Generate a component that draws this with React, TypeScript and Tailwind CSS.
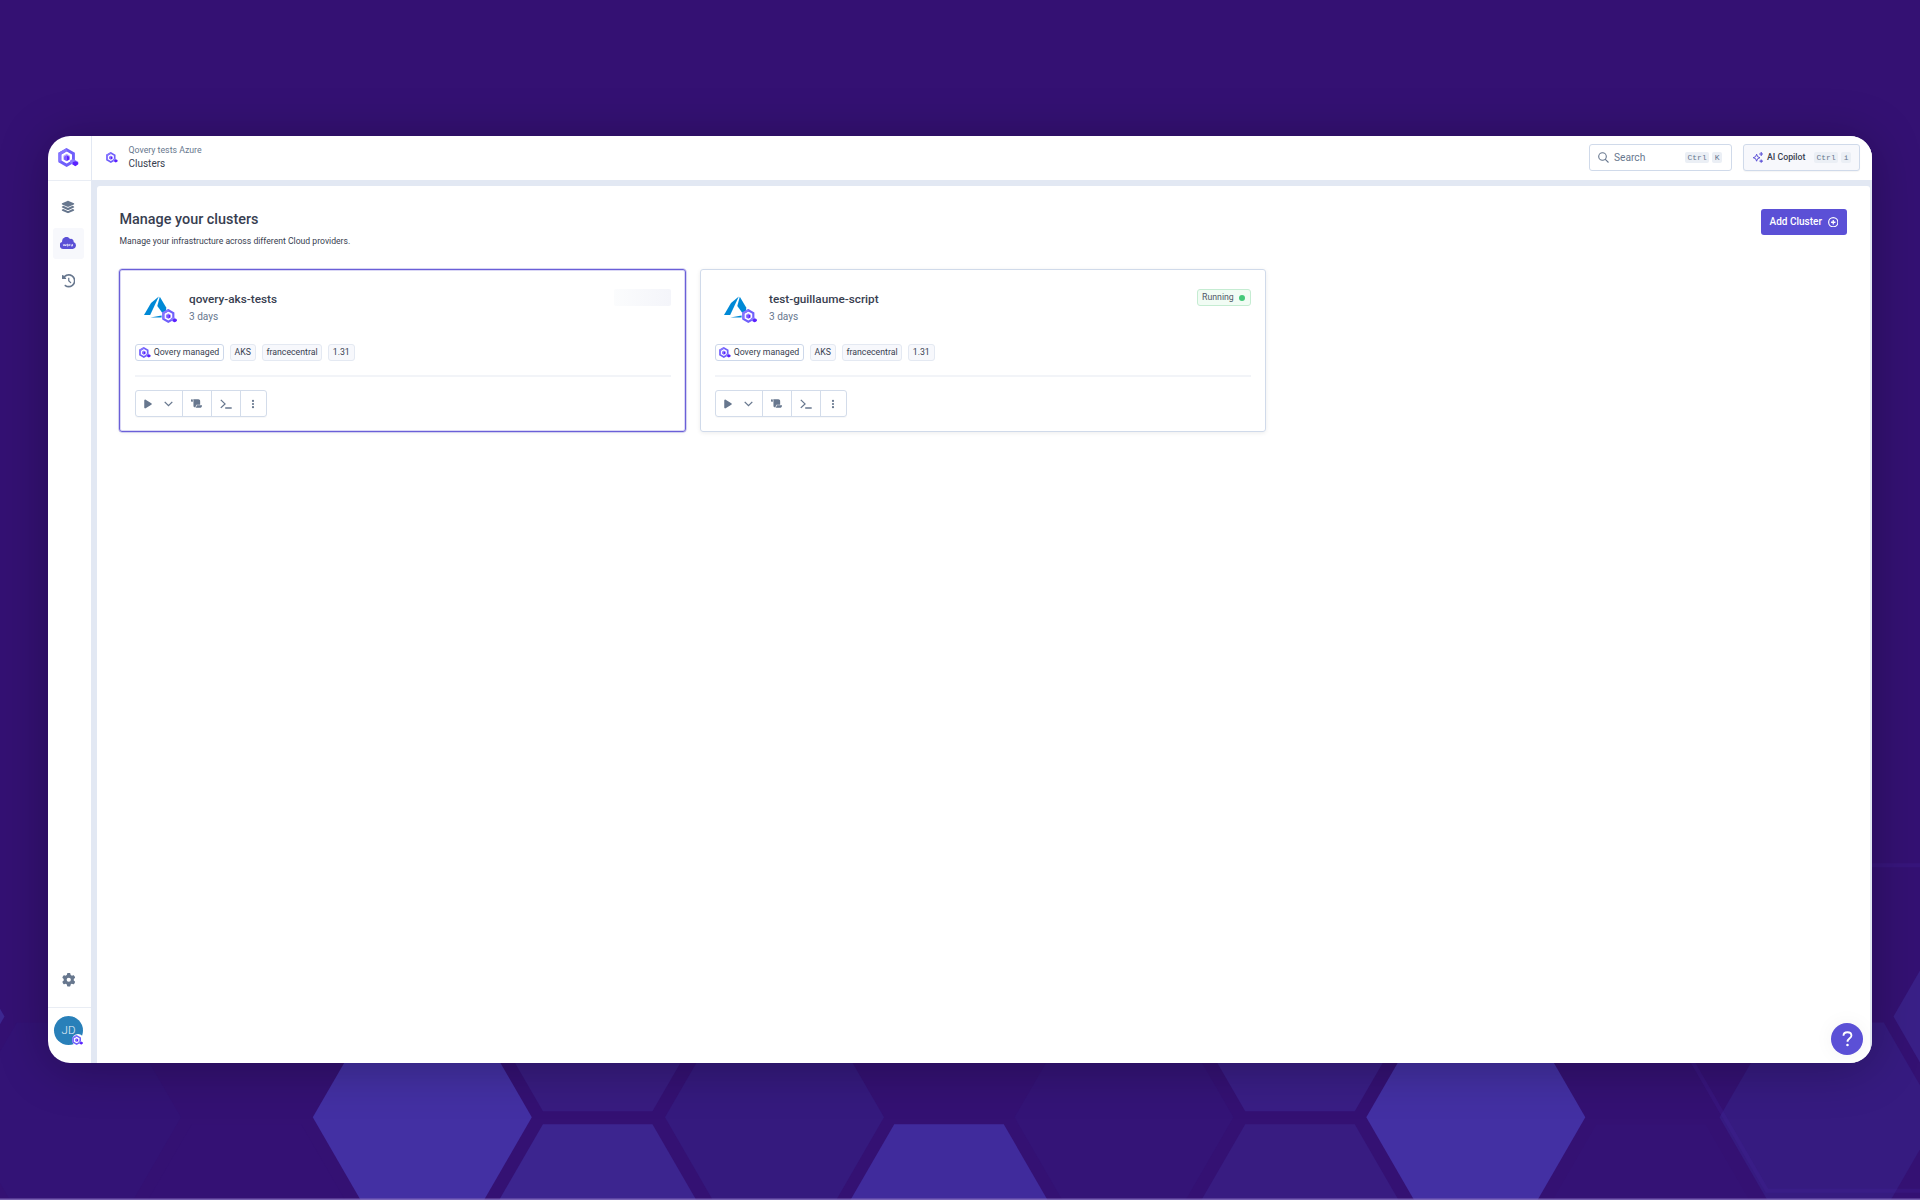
import type { ReactNode } from "react";
import { FaLayerGroup, FaClockRotateLeft, FaGear, FaPlay, FaScroll, FaEllipsisVertical } from "react-icons/fa6";

const hexPoints = (cx: number, cy: number, s: number) => {
  const h = s * 0.866;
  return [
    [cx - s, cy], [cx - s / 2, cy - h], [cx + s / 2, cy - h],
    [cx + s, cy], [cx + s / 2, cy + h], [cx - s / 2, cy + h],
  ].map((p) => p.join(",")).join(" ");
};

const HEXES: [number, number, string][] = [
  [-105, 1016.5, "#3d2891"],
  [71.5, 1117.3, "#331376"],
  [246.5, 1219, "#341174"],
  [422.3, 1117.3, "#4330a3"],
  [597.7, 1016.5, "#381c80"],
  [597.7, 1219, "#3c258f"],
  [774.5, 1117.3, "#351a7e"],
  [949, 1219, "#402b9c"],
  [1124, 1117.3, "#341477"],
  [1300, 1016.5, "#391e85"],
  [1300, 1219, "#381c81"],
  [1475.8, 1117.3, "#4330a3"],
  [1651, 1219, "#341275"],
  [1829, 1117.3, "#361b80"],
  [2003, 1016.5, "#3a2088"],
];

function Backdrop() {
  return (
    <svg className="absolute inset-0" width="1920" height="1200" viewBox="0 0 1920 1200">
      {HEXES.map(([x, y, c]) => (
        <polygon key={`${x}-${y}`} points={hexPoints(x, y, 109.5)} fill={c} />
      ))}
      <polygon points={hexPoints(1861, 1028, 188)} fill="none" stroke="#4527a0" strokeOpacity="0.2" strokeWidth="4" />
      <rect x="0" y="1198.5" width="1920" height="1.5" fill="#8a74bf" fillOpacity="0.8" />
    </svg>
  );
}

function QoveryLogo({ className }: { className: string }) {
  return (
    <svg className={className} viewBox="0.3 0.2 20.7 19.6">
      <path d="M9 2 16 6v8l-7 4-7-4V6z" fill="none" stroke="#6f5ffb" strokeWidth="3" />
      <path d="M2 14V6l7-4" fill="none" stroke="#8575ff" strokeWidth="3" />
      <path d="M9 6.2 12.4 8.1v3.9L9 13.9l-3.4-1.9V8.1z" fill="#b5a8ff" />
      <path d="M9 7.6l2.7 1.5v3L9 13.6z" fill="#5a1fff" />
      <path d="M9 7.6 6.3 9.1v3L9 13.6z" fill="#7c5cff" />
      <path d="M12.6 13 15 11.6l2.6 1 3.3 1.8v2.4L18 18.6l-3-1.4-2.4-1.8z" fill="#8d7dff" />
      <path d="M15.2 15 18 13.8l2.9 1.3v1.9L18 18.9l-2.8-1.7z" fill="#5b20ff" />
    </svg>
  );
}

function AzureLogo() {
  return (
    <svg className="h-[23px] w-[29px]" viewBox="0 0 29 23">
      <path d="M14.8.4 7 7 0 19h6.2z" fill="#0089d6" />
      <path d="M15.8.8 22.2 11.5v3.2l-4 2-4.9-6.6z" fill="#0089d6" />
      <path d="M6.4 21.6 17.6 19.6v2z" fill="#0089d6" />
    </svg>
  );
}

function CloudIcon() {
  return (
    <svg className="mb-[1px] h-[12px] w-[16px]" viewBox="0 0 16 12">
      <path d="M3.6 11.9A3.6 3.6 0 0 1 2.1 4.9 4.3 4.3 0 0 1 10 2a2.7 2.7 0 0 1 3.6 3.1 3.5 3.5 0 0 1-.9 6.8z" fill="#5b50d6" />
      <path d="M3.3 7.2l.6 1.8.8-1.6.7 1.6.7-1.8M7 7.2v1.8h1.2V7.4zM9.4 9V7.4h.9M11.2 7.4V9h1.3V7" fill="none" stroke="#fff" strokeWidth=".8" opacity=".85" />
    </svg>
  );
}

function Kbd({ children }: { children: ReactNode }) {
  return (
    <span className="flex h-[11px] items-center rounded-[2px] bg-[#ebeff5] px-[2.5px] font-['Liberation_Mono',monospace] text-[8px] text-[#67778e]">
      {children}
    </span>
  );
}

function Tag({ children, className }: { children: ReactNode; className: string }) {
  return (
    <span className={`flex h-[17px] items-center justify-center rounded-[3px] border text-[8.75px] whitespace-nowrap text-[#383e50] ${className}`}>
      {children}
    </span>
  );
}

function ClusterCard({ name, selected = false }: { name: string; selected?: boolean }) {
  return (
    <section
      className={
        selected
          ? "flex h-[163px] w-[567px] flex-col rounded-[3px] border border-[#6a5fd8] pt-[18.5px] pr-[14px] pl-[15px] shadow-[0_0_0_0.5px_#6a5fd880,inset_0_0_0_1px_#6a5fd840,0_1px_4px_rgba(0,0,0,0.06)]"
          : "flex h-[163px] w-[566px] flex-col rounded-[3px] border border-[#d0daea] pt-[18.5px] pr-[14px] pl-[14px] shadow-[0_1px_4px_rgba(0,0,0,0.08)]"
      }
    >
      <div className="flex h-[56px] shrink-0 items-start">
        <div className="relative mt-[8px] ml-[9px] w-[45px]">
          <AzureLogo />
          <QoveryLogo className="absolute top-[13px] left-[17.5px] h-[14px] w-[15px]" />
        </div>
        <div className="flex flex-col">
          <h2 className="mt-[2.5px] text-[11.75px] leading-[16px] font-medium text-[#383e50]">{name}</h2>
          <p className="mt-[1px] text-[10.1px] leading-[18px] text-[#67778e]">3 days</p>
        </div>
        {selected ? (
          <div className="mt-[0.7px] ml-auto h-[17px] w-[57px] rounded-[2px] bg-linear-to-r from-[#fbfcfd] to-[#f4f5fa]" />
        ) : (
          <div className="mt-[0.9px] ml-auto flex h-[17px] w-[54px] items-center justify-between rounded-[3px] border border-[#c5ecd2] bg-[#f1fcf4] pr-[5px] pl-[4px] text-[8.75px] text-[#505867]">
            Running
            <span className="size-[6px] rounded-full bg-[#44c979]" />
          </div>
        )}
      </div>
      <div className="flex h-[18px] shrink-0 gap-[6px]">
        <Tag className="w-[88.5px] gap-[3px] border-[#cdd8ea]">
          <QoveryLogo className="h-[11px] w-[11.5px]" />
          Qovery managed
        </Tag>
        <Tag className="w-[26.5px] border-[#e4e9f2] bg-[#f7f8fc]">AKS</Tag>
        <Tag className="w-[60px] border-[#e4e9f2] bg-[#f7f8fc]">francecentral</Tag>
        <Tag className="w-[26.5px] border-[#e4e9f2] bg-[#f7f8fc]">1.31</Tag>
      </div>
      <div className="mt-[13px] h-[1.5px] shrink-0 bg-[#f2f4f8]" />
      <div className="mt-[13.5px] flex h-[26.5px] w-[131.5px] shrink-0 rounded-[3px] border border-[#d3dcea] text-[#67778e] shadow-[0_1px_1px_rgba(0,0,0,0.03)]">
        <div className="flex w-[47px] items-center border-r border-[#d3dcea] pl-[7px]">
          <FaPlay size={10} />
          <svg className="ml-[11px] h-[6px] w-[9px]" viewBox="0 0 9 6">
            <path d="M.7.9 4.5 4.7 8.3.9" fill="none" stroke="currentColor" strokeWidth="1.3" />
          </svg>
        </div>
        <div className="flex w-[28.5px] items-center justify-center border-r border-[#d3dcea]">
          <FaScroll size={11} />
        </div>
        <div className="flex w-[29px] items-center justify-center border-r border-[#d3dcea]">
          <svg className="h-[10px] w-[12px]" viewBox="0 0 12 10">
            <path d="M.8.9 5 4.9.8 8.9M5.2 9h6.5" fill="none" stroke="currentColor" strokeWidth="1.3" />
          </svg>
        </div>
        <div className="flex flex-1 items-center justify-center">
          <FaEllipsisVertical size={10} />
        </div>
      </div>
    </section>
  );
}

function Sidebar() {
  return (
    <nav className="flex w-[43px] shrink-0 flex-col items-center text-[#67778e]">
      <div className="flex h-[44.5px] w-full shrink-0 items-center border-b border-[#e9edf4] pb-[2px] pl-[10px]">
        <QoveryLogo className="h-[19px] w-[20.5px]" />
      </div>
      <div className="mt-[10.5px] mr-[2.5px] flex flex-col gap-[6px]">
        <div className="flex size-[31px] items-center justify-center"><FaLayerGroup size={14} /></div>
        <div className="flex size-[31px] items-center justify-center rounded-[3px] bg-[#f7f8fc]"><CloudIcon /></div>
        <div className="flex size-[31px] items-center justify-center"><FaClockRotateLeft size={13.5} /></div>
      </div>
      <div className="mt-auto mr-[2.5px] flex h-[54px] items-center justify-center"><FaGear size={13.5} /></div>
      <div className="flex h-[56.5px] w-full shrink-0 border-t border-[#e9edf4] pt-[8.5px] pl-[6px]">
        <div className="relative flex size-[29px] items-center justify-center rounded-full bg-[#2980b9] text-[11.5px] font-light text-white/90">
          JD
          <span className="absolute -right-[0.5px] -bottom-[0.5px] flex size-[12px] items-center justify-center rounded-full bg-white">
            <QoveryLogo className="h-[10px] w-[11px]" />
          </span>
        </div>
      </div>
    </nav>
  );
}

function Header() {
  return (
    <header className="flex h-[44px] shrink-0 items-center border-l border-[#e2e8f3] bg-white pr-[12px] pb-[1.5px] pl-[14px]">
      <QoveryLogo className="h-[11px] w-[11.5px]" />
      <div className="ml-[11px] flex flex-col">
        <span className="text-[8.75px] leading-[13px] text-[#67778e]">Qovery tests Azure</span>
        <span className="text-[10px] leading-[14px] text-[#383e50]">Clusters</span>
      </div>
      <div className="ml-auto flex h-[27px] w-[143.5px] items-center rounded-[3px] border border-[#d0daea] pr-[9px] pl-[8px]">
        <svg className="h-[11px] w-[11px]" viewBox="0 0 11 11">
          <path d="M7.3 7.3 10.5 10.5M4.5.7a3.8 3.8 0 1 1 0 7.6 3.8 3.8 0 0 1 0-7.6z" fill="none" stroke="#67778e" strokeWidth="1.1" />
        </svg>
        <span className="ml-[5.5px] text-[10.2px] text-[#67778e]">Search</span>
        <div className="ml-auto flex gap-[3px]"><Kbd>Ctrl</Kbd><Kbd>K</Kbd></div>
      </div>
      <div className="ml-[11px] flex h-[27px] w-[117px] items-center rounded-[3px] border border-[#d0daea] bg-[#f7f8fc] pr-[8px] pl-[9px] shadow-[0_1px_1px_rgba(0,0,0,0.04)]">
        <svg className="h-[11px] w-[10px]" viewBox="0 0 10 11">
          <path d="M3.6 2.2 4.6 4.7 7 5.7 4.6 6.7 3.6 9.2 2.6 6.7.2 5.7l2.4-1z" fill="none" stroke="#5b50d6" strokeWidth="1" />
          <path d="M8.2 0v4M6.2 2h4M8.2 7.4v3.4M6.5 9.1h3.4" stroke="#5b50d6" strokeWidth="1.1" />
        </svg>
        <span className="ml-[4px] text-[8.75px] font-medium text-[#383e50]">AI Copilot</span>
        <div className="ml-auto flex gap-[3px]"><Kbd>Ctrl</Kbd><Kbd>i</Kbd></div>
      </div>
    </header>
  );
}

export default function App() {
  return (
    <div className="relative h-[1200px] w-[1920px] overflow-hidden bg-[#341173] px-[48px] pt-[136.4px] font-[Roboto,sans-serif]">
      <Backdrop />
      <div className="relative flex h-[927px] w-[1824px] overflow-hidden rounded-[22px] bg-white">
        <Sidebar />
        <div className="flex min-w-0 flex-1 flex-col bg-[#e2e8f3]">
          <Header />
          <main className="mt-[5.5px] mr-[2px] ml-[6px] flex-1 rounded-t-[3px] bg-white pr-[23px] pl-[22px]">
            <div className="flex justify-between pt-[23px]">
              <div className="pt-[0.8px] pl-[0.5px]">
                <h1 className="text-[14.4px] leading-[20px] font-medium text-[#383e50]">Manage your clusters</h1>
                <p className="mt-[4.2px] text-[8.64px] leading-[14px] text-[#383e50]">Manage your infrastructure across different Cloud providers.</p>
              </div>
              <div className="flex h-[26px] w-[86px] items-center justify-center gap-[6px] rounded-[3px] bg-[#5b50d6] text-[10px] font-medium whitespace-nowrap text-white">
                Add Cluster
                <svg className="size-[10.5px]" viewBox="0 0 10 10">
                  <circle cx="5" cy="5" r="4.4" fill="none" stroke="#fff" strokeWidth="1.1" />
                  <path d="M5 2.9v4.2M2.9 5h4.2" stroke="#fff" strokeWidth="1.2" />
                </svg>
              </div>
            </div>
            <div className="mt-[21.1px] flex gap-[14px]">
              <ClusterCard name="qovery-aks-tests" selected />
              <ClusterCard name="test-guillaume-script" />
            </div>
          </main>
        </div>
        <div className="absolute right-[9px] bottom-[8.5px] flex size-[32px] items-center justify-center rounded-full bg-[#5b50d6] shadow-[0_0_20px_rgba(0,0,0,0.05)]">
          <svg className="h-[16px] w-[11px]" viewBox="0 0 12 17">
            <path d="M1.6 5C1.6 2.5 3.4 1.1 5.9 1.1S10.3 2.6 10.3 4.8C10.3 7.8 6 7.6 6 11.6" fill="none" stroke="#fff" strokeWidth="2" />
            <circle cx="6" cy="15" r="1.4" fill="#fff" />
          </svg>
        </div>
      </div>
      <div className="pointer-events-none absolute top-[136.4px] left-[48px] h-[927px] w-[1824px] rounded-[22px] shadow-[0_4px_50px_rgba(0,0,0,0.28)]" />
    </div>
  );
}
